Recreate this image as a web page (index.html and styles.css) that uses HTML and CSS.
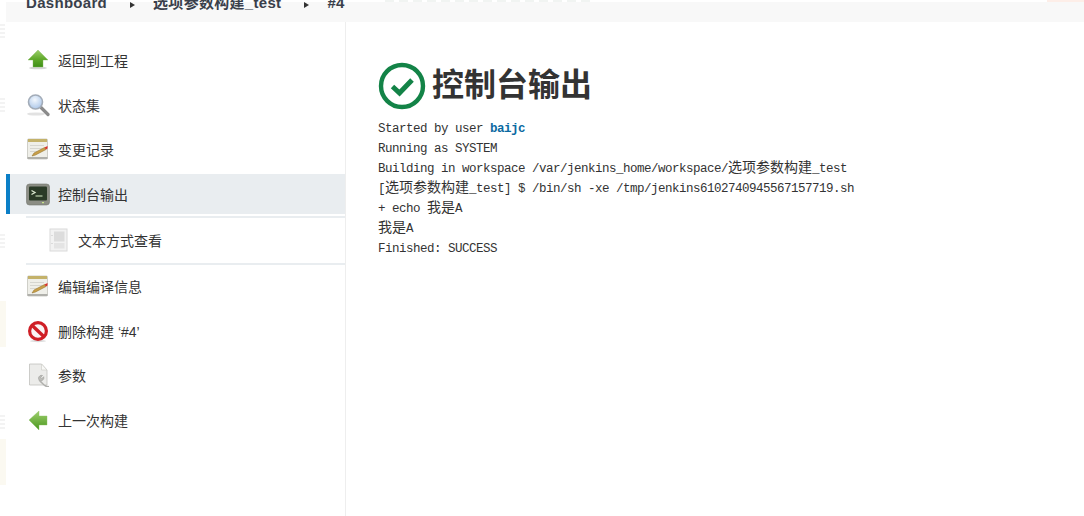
FILE: index.html
```html
<!DOCTYPE html>
<html lang="zh">
<head>
<meta charset="utf-8">
<title>控制台输出</title>
<link rel="stylesheet" href="styles.css">
</head>
<body>
<div class="page">
  <div class="gutter" aria-hidden="true">
    <span class="mark m1"></span>
    <span class="mark m2"></span>
    <span class="mark m3"></span>
    <span class="paper p1"></span>
    <span class="mark m4"></span>
    <span class="paper p2"></span>
  </div>
  <div class="shell">
    <header class="crumbs">
      <a class="crumb" href="#">Dashboard</a>
      <span class="sep"></span>
      <a class="crumb" href="#">选项参数构建_test</a>
      <span class="sep"></span>
      <a class="crumb" href="#">#4</a>
    </header>
    <div class="ghost-top" aria-hidden="true"></div>
    <div class="ghost-pink" aria-hidden="true"></div>
    <div class="body">
      <nav class="side">
        <div class="group first">
          <a class="task" href="#">
            <svg class="ic" viewBox="0 0 24 24"><defs><linearGradient id="gu" x1="0" y1="0" x2="0" y2="1"><stop offset="0" stop-color="#9ccf6a"/><stop offset=".55" stop-color="#5fa82a"/><stop offset="1" stop-color="#3f8f17"/></linearGradient></defs><ellipse cx="12" cy="20" rx="9" ry="1.3" fill="#d6d6d6"/><path d="M12 2 22 12h-5v7H7v-7H2z" fill="url(#gu)" stroke="#7fb85a" stroke-width=".4"/></svg>
            <span>返回到工程</span>
          </a>
          <a class="task" href="#">
            <svg class="ic" viewBox="0 0 24 24"><defs><radialGradient id="gl" cx=".45" cy=".35" r=".7"><stop offset="0" stop-color="#f2f7fd"/><stop offset="1" stop-color="#a8c4e8"/></radialGradient></defs><ellipse cx="10" cy="21" rx="9" ry="1.6" fill="#e2e2e2"/><path d="M15 14.5 22 21.5" stroke="#8b8b8b" stroke-width="3.2" stroke-linecap="round"/><circle cx="9.5" cy="9" r="7" fill="url(#gl)" stroke="#a3acb8" stroke-width="1.6"/></svg>
            <span>状态集</span>
          </a>
          <a class="task" href="#">
            <svg class="ic" viewBox="0 0 24 24"><rect x="1.5" y="2" width="20" height="20" rx="1" fill="#efefe9" stroke="#c4c4bc" stroke-width=".8"/><rect x="2" y="2" width="19" height="3" fill="#c4b26a"/><path d="M4 8.500h14M4 11.500h12M4 14.500h7" stroke="#d6d6d0" stroke-width="1.2"/><rect x="1.500" y="20" width="20" height="2" fill="#b0b0ab"/><path d="M6 19 8 16 18.500 10.500 20 12.500 9.500 18z" fill="#c9a04a" stroke="#8f6a1e" stroke-width=".5"/><path d="M18.500 10.500 21.500 9 21.500 11.500 20 12.500z" fill="#d8342c"/></svg>
            <span>变更记录</span>
          </a>
          <a class="task active" href="#">
            <svg class="ic" viewBox="0 0 24 24"><rect x=".5" y="2" width="23" height="21" rx="3" fill="#8b8d84" stroke="#74766e" stroke-width=".6"/><rect x="3" y="4.500" width="18" height="14" rx="1" fill="#2a3a27"/><path d="M5.500 8.500 9 10.500 5.500 12.500" fill="none" stroke="#dbe8d0" stroke-width="1.300"/><path d="M9.500 14h7" stroke="#bcd0ae" stroke-width="1.200"/><rect x="16" y="20" width="2" height="1.200" fill="#c9e58a"/></svg>
            <span>控制台输出</span>
          </a>
        </div>
        <div class="subtask">
          <a class="task sub" href="#">
            <svg class="ic-sub" viewBox="0 0 22 24"><rect x="2" y="1" width="17" height="22" fill="#f2f2f2" stroke="#dadada"/><rect x="6" y="3.500" width="10.500" height="10" fill="#dcdcdc"/><rect x="6" y="15" width="10.500" height="5.500" fill="#e4e4e4"/><path d="M4 7v1M4 15v1" stroke="#c4c4c4"/></svg>
            <span>文本方式查看</span>
          </a>
        </div>
        <div class="group">
          <a class="task" href="#">
            <svg class="ic" viewBox="0 0 24 24"><rect x="1.5" y="2" width="20" height="20" rx="1" fill="#efefe9" stroke="#c4c4bc" stroke-width=".8"/><rect x="2" y="2" width="19" height="3" fill="#c4b26a"/><path d="M4 8.500h14M4 11.500h12M4 14.500h7" stroke="#d6d6d0" stroke-width="1.2"/><rect x="1.500" y="20" width="20" height="2" fill="#b0b0ab"/><path d="M6 19 8 16 18.500 10.500 20 12.500 9.500 18z" fill="#c9a04a" stroke="#8f6a1e" stroke-width=".5"/><path d="M18.500 10.500 21.500 9 21.500 11.500 20 12.500z" fill="#d8342c"/></svg>
            <span>编辑编译信息</span>
          </a>
          <a class="task" href="#">
            <svg class="ic" viewBox="0 0 24 24"><ellipse cx="12" cy="22" rx="8" ry="1.200" fill="#ddd"/><circle cx="12" cy="12" r="8.400" fill="#fbf4f4" stroke="#cf1f26" stroke-width="3.200"/><path d="M6.200 6.600 17.800 17.400" stroke="#cf1f26" stroke-width="3.400"/></svg>
            <span>删除构建 ‘#4’</span>
          </a>
          <a class="task" href="#">
            <svg class="ic" viewBox="0 0 24 24"><path d="M3.500 1h12L21 7v15H3.500z" fill="#ececea" stroke="#c2c2be" stroke-width=".8"/><path d="M15.500 1v6H21z" fill="#f8f8f6" stroke="#c9c9c5" stroke-width=".6"/><path d="M12.500 15.500a3 3 0 0 1 4-3l-1.800 1.800 1.200 1.200 1.800-1.800a3 3 0 0 1-3.300 4L19 22.500 23 23.500l-1 .3-3-.6-5.500-5z" fill="#bdbdb9" stroke="#9b9b97" stroke-width=".6"/></svg>
            <span>参数</span>
          </a>
          <a class="task" href="#">
            <svg class="ic" viewBox="0 0 24 24"><defs><linearGradient id="gb" x1="0" y1="0" x2="0" y2="1"><stop offset="0" stop-color="#a0d06e"/><stop offset="1" stop-color="#48961d"/></linearGradient></defs><path d="M3 12 13 3v5h8v9h-8v5z" fill="url(#gb)" stroke="#88bf62" stroke-width=".4"/></svg>
            <span>上一次构建</span>
          </a>
        </div>
      </nav>
      <main class="main">
        <h1 class="title">
          <svg class="status" viewBox="0 0 48 48"><circle cx="24" cy="24" r="21" fill="none" stroke="#138347" stroke-width="4.400"/><path d="M14.500 24.500 21.500 31 34 18" fill="none" stroke="#138347" stroke-width="5"/></svg>
          <span class="title-text">控制台输出</span>
        </h1>
        <div class="console">
          <div class="line">Started by user <a class="user" href="#">baijc</a></div>
          <div class="line">Running as SYSTEM</div>
          <div class="line">Building in workspace /var/jenkins_home/workspace/<span class="cjk">选项参数构建</span>_test</div>
          <div class="line">[<span class="cjk">选项参数构建</span>_test] $ /bin/sh -xe /tmp/jenkins6102740945567157719.sh</div>
          <div class="line">+ echo <span class="cjk">我是</span>A</div>
          <div class="line"><span class="cjk">我是</span>A</div>
          <div class="line">Finished: SUCCESS</div>
        </div>
      </main>
    </div>
  </div>
</div>
</body>
</html>
```
FILE: styles.css
```css
* { box-sizing: border-box; }
html, body { margin: 0; height: 100%; background: #fff; overflow: hidden; }
body { font-family: "Liberation Sans", "Noto Sans CJK SC", sans-serif; color: #333; }
a { color: inherit; text-decoration: none; }

.page { display: flex; height: 516px; }

.gutter { width: 6px; flex: none; display: flex; flex-direction: column; overflow: hidden; }
.mark { display: block; width: 5px; height: 14px; flex: none; background: repeating-linear-gradient(180deg, #f3f3f3 0 2px, #fff 2px 4px); }
.m1 { margin-top: 24px; }
.m2 { margin-top: 60px; }
.m3 { margin-top: 122px; }
.paper { display: block; width: 6px; height: 46px; flex: none; background: #fbf9f1; }
.p1 { margin-top: 53px; }
.m4 { margin-top: 68px; }
.p2 { margin-top: 10px; }

.shell { flex: 1; min-width: 0; display: flex; flex-direction: column; position: relative; }

.crumbs { height: 20px; margin-top: 2px; flex: none; background: #f8f8f8; display: flex; padding-left: 20px; font-size: 15px; font-weight: 700; letter-spacing: .3px; line-height: 1px; color: #3a3f4b; }
.crumb { display: block; white-space: nowrap; }
.sep { width: 0; height: 0; margin: 0 18px 0 23px; border-left: 5px solid #333; border-top: 3px solid transparent; border-bottom: 3px solid transparent; }

.ghost-top { position: absolute; top: 0; left: 379px; width: 205px; height: 2px; background: repeating-linear-gradient(90deg, #f1f4f2 0 9px, #fff 9px 14px); }
.ghost-pink { position: absolute; top: 0; right: 0; width: 37px; height: 2px; background: #fdeee8; }

.body { flex: 1; display: flex; min-height: 0; }

.side { width: 340px; flex: none; border-right: 1px solid #eeeeee; padding-top: 18px; }
.group { display: flex; flex-direction: column; gap: 4.600px; }
.group.first { gap: 4.700px; }
.task { height: 40px; display: flex; align-items: center; gap: 8px; padding-left: 16px; border-left: 4px solid transparent; font-size: 14px; color: #333; }
.task.active { background: #e9edf0; border-left-color: #0b7fc7; }
.ic { width: 24px; height: 24px; flex: none; }
.ic-sub { width: 22px; height: 24px; flex: none; }

.subtask { margin: 2px 0 1px 20px; height: 49px; border-top: 2px solid #e9edf0; border-bottom: 2px solid #e9edf0; }
.task.sub { height: 43px; padding-left: 18px; }

.main { flex: 1; min-width: 0; padding: 40px 0 0 32px; }
.title { margin: 0; display: flex; align-items: center; gap: 6px; height: 48px; font-size: 32px; font-weight: 700; color: #333; font-family: "Noto Sans CJK SC", sans-serif; }
.title-text { margin-bottom: 8px; }
.status { width: 48px; height: 48px; flex: none; }
.console { margin-top: 9px; font-family: "Liberation Mono", "Noto Sans CJK SC", monospace; font-size: 12.500px; letter-spacing: -.5px; color: #333; }
.line { height: 20px; line-height: 20px; white-space: pre; }
.cjk { font-family: "Noto Sans CJK SC", sans-serif; font-size: 14px; letter-spacing: 0; line-height: 1; }
.user { font-weight: 700; color: #0b6aa2; }
```
